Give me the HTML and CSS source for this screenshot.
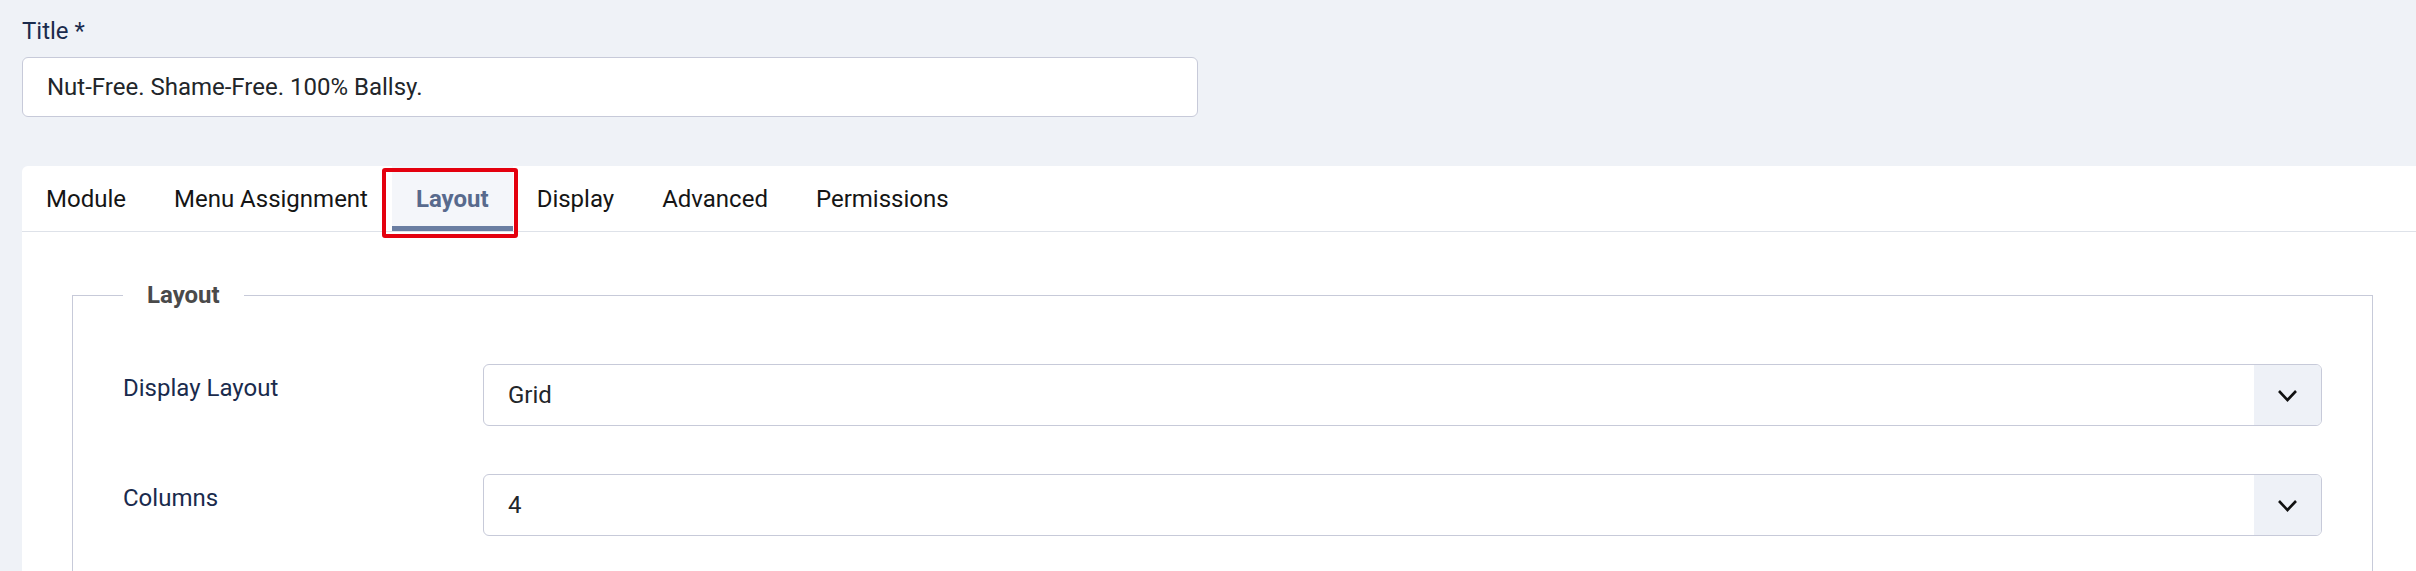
FILE: index.html
```html
<!DOCTYPE html>
<html lang="en">
<head>
    <meta charset="UTF-8">
    <meta name="viewport" content="width=device-width, initial-scale=1.0">
    <title>Edit Module</title>
    <link rel="stylesheet" href="styles.css">
</head>
<body>
    <div class="page">
        <div class="title-field">
            <label class="title-label" for="jform_title">Title *</label>
            <input class="text-input" id="jform_title" type="text" value="Nut-Free. Shame-Free. 100% Ballsy.">
        </div>

        <div class="tabset">
            <div class="tab-list">
                <button class="tab">Module</button>
                <button class="tab">Menu Assignment</button>
                <button class="tab active">Layout<span class="tab-mark"></span></button>
                <button class="tab">Display</button>
                <button class="tab">Advanced</button>
                <button class="tab">Permissions</button>
            </div>

            <div class="tab-panel">
                <fieldset class="options">
                    <legend>Layout</legend>

                    <div class="control-row">
                        <label class="control-label">Display Layout</label>
                        <div class="select">
                            <span class="select-value">Grid</span>
                            <span class="select-arrow">
                                <svg width="21" height="13" viewBox="0 0 21 13"><polyline points="2,2 10.5,11 19,2" fill="none" stroke="#111" stroke-width="2.6"/></svg>
                            </span>
                        </div>
                    </div>

                    <div class="control-row">
                        <label class="control-label">Columns</label>
                        <div class="select">
                            <span class="select-value">4</span>
                            <span class="select-arrow">
                                <svg width="21" height="13" viewBox="0 0 21 13"><polyline points="2,2 10.5,11 19,2" fill="none" stroke="#111" stroke-width="2.6"/></svg>
                            </span>
                        </div>
                    </div>
                </fieldset>
            </div>
        </div>
    </div>
</body>
</html>
```

FILE: styles.css
```css
* {
    margin: 0;
    padding: 0;
    box-sizing: border-box;
}

body {
    font-family: Roboto, 'Liberation Sans', Arial, sans-serif;
    font-size: 24px;
    background: #eff2f7;
    color: #22262a;
    overflow: hidden;
}

.page {
    padding: 13px 0 0 22px;
}

.title-field {
    width: 1176px;
}

.title-label {
    display: block;
    line-height: 36px;
    color: #1a2b4d;
    margin-bottom: 8px;
}

.text-input {
    display: block;
    width: 100%;
    height: 60px;
    padding: 0 24px;
    font-family: inherit;
    font-size: 24px;
    color: #22262a;
    background: #fff;
    border: 1px solid #c7cad9;
    border-radius: 6px;
    outline: none;
}

/* tabs */
.tabset {
    margin-top: 49px;
    background: #fff;
    border-radius: 6px 0 0 0;
}

.tab-list {
    display: flex;
    height: 66px;
    border-bottom: 1px solid #dee2e9;
}

.tab {
    position: relative;
    height: 65px;
    padding: 0 24px;
    font-family: inherit;
    font-size: 24px;
    color: #151515;
    background: none;
    border: none;
    cursor: pointer;
}

.tab.active {
    font-weight: bold;
    color: #586a8d;
    background: #f4f6fa;
}

.tab.active::after {
    content: '';
    position: absolute;
    left: 0;
    right: 0;
    bottom: 0;
    height: 5px;
    background: #6a7ea2;
}

.tab-mark {
    position: absolute;
    left: -10px;
    right: -5px;
    top: 2px;
    bottom: -7px;
    border: 4px solid #e4000e;
    border-radius: 3px;
    z-index: 2;
}

/* options panel */
.tab-panel {
    padding: 45px 43px 40px 50px;
}

.options {
    border: 1px solid #c7cad9;
    padding: 51px 50px 20px;
}

.options legend {
    padding: 0 24px;
    line-height: 36px;
    font-weight: bold;
    color: #4a4a4a;
}

.control-row {
    display: grid;
    grid-template-columns: 360px 1fr;
    margin-bottom: 48px;
}

.control-label {
    padding-top: 6px;
    line-height: 36px;
    color: #1a2b4d;
}

.select {
    display: flex;
    height: 62px;
    border: 1px solid #c7cad9;
    border-radius: 6px;
    background: #fff;
    overflow: hidden;
}

.select-value {
    flex: 1;
    display: flex;
    align-items: center;
    padding-left: 24px;
    color: #22262a;
}

.select-arrow {
    width: 67px;
    display: flex;
    align-items: center;
    justify-content: center;
    background: #eef1f7;
}

.select-arrow svg {
    display: block;
}
```
